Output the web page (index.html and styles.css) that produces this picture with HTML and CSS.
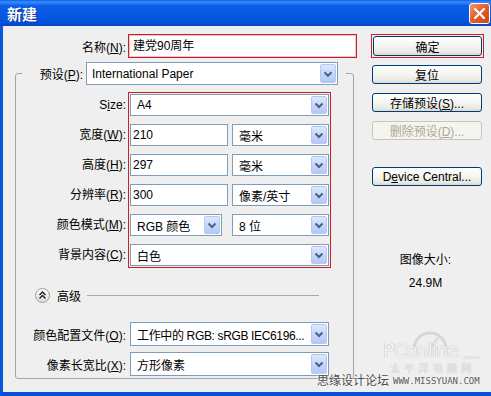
FILE: index.html
```html
<!DOCTYPE html>
<html lang="zh-CN">
<head>
    <meta charset="UTF-8">
    <title>新建</title>
    <link rel="stylesheet" href="styles.css">
</head>
<body>
<div class="window">
    <div class="titlebar">
        <span class="title">新建</span>
        <span class="close">
            <svg width="13" height="13" viewBox="0 0 13 13"><path d="M2 2 L11 11 M11 2 L2 11" stroke="#fff" stroke-width="2.2" stroke-linecap="round"/></svg>
        </span>
    </div>
    <div class="frame">
        <div class="main">
            <div class="name-row">
                <span class="lbl name-lbl">名称(<u>N</u>):</span>
                <div class="name-box">建党90周年</div>
            </div>
            <fieldset class="group">
                <legend>
                    <div class="preset">
                        <span class="lbl">预设(<u>P</u>):</span>
                        <div class="select preset-sel"><span class="val">International Paper</span><span class="arrow"></span></div>
                    </div>
                </legend>
                <div class="params">
                    <div class="labels">
                        <span class="lbl">S<u>i</u>ze:</span>
                        <span class="lbl">宽度(<u>W</u>):</span>
                        <span class="lbl">高度(<u>H</u>):</span>
                        <span class="lbl">分辨率(<u>R</u>):</span>
                        <span class="lbl">颜色模式(<u>M</u>):</span>
                        <span class="lbl">背景内容(<u>C</u>):</span>
                    </div>
                    <div class="mark params-box">
                        <div class="select full"><span class="val">A4</span><span class="arrow"></span></div>
                        <div class="pair">
                            <div class="input">210</div>
                            <div class="select unit"><span class="val">毫米</span><span class="arrow"></span></div>
                        </div>
                        <div class="pair">
                            <div class="input">297</div>
                            <div class="select unit"><span class="val">毫米</span><span class="arrow"></span></div>
                        </div>
                        <div class="pair">
                            <div class="input">300</div>
                            <div class="select unit"><span class="val">像素/英寸</span><span class="arrow"></span></div>
                        </div>
                        <div class="pair">
                            <div class="select mode"><span class="val">RGB 颜色</span><span class="arrow"></span></div>
                            <div class="select unit"><span class="val">8 位</span><span class="arrow"></span></div>
                        </div>
                        <div class="select full"><span class="val">白色</span><span class="arrow"></span></div>
                    </div>
                </div>
                <div class="advanced">
                    <svg class="toggle" width="15" height="15" viewBox="0 0 15 15">
                        <defs><linearGradient id="tg" x1="0" y1="0" x2="0" y2="1"><stop offset="0" stop-color="#ffffff"/><stop offset="1" stop-color="#dcdcdc"/></linearGradient></defs>
                        <circle cx="7.5" cy="7.5" r="7" fill="url(#tg)" stroke="#9c9c9c"/>
                        <path d="M4.5 7 L7.5 4 L10.5 7 M4.5 10.5 L7.5 7.5 L10.5 10.5" fill="none" stroke="#222" stroke-width="1.4"/>
                    </svg>
                    <span class="adv-text">高级</span>
                    <span class="rule"></span>
                </div>
                <div class="row">
                    <span class="lbl">颜色配置文件(<u>O</u>):</span>
                    <div class="select full tall"><span class="val tight">工作中的 RGB: sRGB IEC6196...</span><span class="arrow"></span></div>
                </div>
                <div class="row">
                    <span class="lbl">像素长宽比(<u>X</u>):</span>
                    <div class="select full tall"><span class="val">方形像素</span><span class="arrow"></span></div>
                </div>
            </fieldset>
        </div>
        <div class="side">
            <div class="mark ok-box"><button class="btn ok">确定</button></div>
            <button class="btn reset">复位</button>
            <button class="btn">存储预设(<u>S</u>)...</button>
            <button class="btn disabled">删除预设(<u>D</u>)...</button>
            <button class="btn device">D<u>e</u>vice Central...</button>
            <div class="size-info">
                <p>图像大小:</p>
                <p class="size-val">24.9M</p>
            </div>
        </div>
    </div>
    <div class="watermark">
        <svg class="dial" width="40" height="20" viewBox="0 0 40 20"><path d="M4 19 A16 16 0 0 1 36 19" fill="none" stroke="#d6d6d6" stroke-width="3"/><path d="M20 19 L28 8" stroke="#d6d6d6" stroke-width="2"/></svg>
        <span class="pc">PConline</span>
        <span class="pc-dom">.com.cn</span>
        <span class="pc-cn">太 平 洋 电 脑 网</span>
        <span class="wm-cn">思缘设计论坛</span>
        <span class="wm-url">WWW.MISSYUAN.COM</span>
    </div>
</div>
</body>
</html>
```

FILE: styles.css
```css
*{
    margin: 0;
    padding: 0;
    box-sizing: border-box;
}
body{
    width: 491px;
    height: 396px;
    overflow: hidden;
    background: #efefef;
    font-family: "Liberation Sans", "Noto Sans CJK SC", sans-serif;
    font-size: 12px;
    color: #000;
}
.window{
    position: relative;
    width: 491px;
    height: 396px;
    display: flex;
    flex-direction: column;
}
.titlebar{
    height: 26px;
    flex: none;
    display: flex;
    align-items: center;
    justify-content: space-between;
    padding: 0 1px 0 7px;
    background: linear-gradient(#0a5ff0 0%, #3a8cf8 8%, #0c5de9 22%, #0558e2 60%, #0452da 88%, #0244c4 100%);
}
.title{
    color: #fff;
    font-family: "Noto Sans CJK SC", sans-serif;
    font-weight: bold;
    font-size: 15px;
    text-shadow: 1px 1px 0 #0a2f95;
}
.close{
    width: 21px;
    height: 21px;
    border: 1px solid #fff;
    border-radius: 3px;
    background: linear-gradient(135deg, #f29a6c 0%, #e2612f 45%, #cf4316 100%);
    display: flex;
    align-items: center;
    justify-content: center;
}
.frame{
    flex: 1;
    display: flex;
    border-left: 3px solid #0858dc;
    border-bottom: 4px solid #0650d6;
    background: #efefef;
}
.main{
    width: 357px;
    padding-top: 8px;
}
.lbl{
    text-align: right;
    white-space: nowrap;
}
.name-row{
    display: flex;
    align-items: center;
}
.name-lbl{
    width: 123px;
    margin-right: 2px;
}
.name-box{
    width: 229px;
    height: 24px;
    line-height: 22px;
    padding-left: 4px;
    background: #fff;
    border: 1px solid #c8202a;
    box-shadow: inset 0 0 0 1px #eec4c4;
}
.group{
    margin: 4px 0 0 12px;
    width: 339px;
    border: 1px solid #a6a6a6;
    border-radius: 3px;
    padding: 7px 0 2px 0;
}
.group legend{
    margin-left: 6px;
    padding: 0 8px 0 14px;
}
.preset{
    display: flex;
    align-items: center;
    height: 23px;
}
.preset .lbl{
    width: 47px;
    margin-right: 3px;
}
.select{
    display: flex;
    align-items: center;
    height: 22px;
    background: #fff;
    border: 1px solid #7f9db9;
}
.select .val{
    flex: 1;
    padding-left: 6px;
    white-space: nowrap;
}
.select .val.tight{
    letter-spacing: -0.35px;
}
.select .arrow{
    width: 16px;
    align-self: stretch;
    margin: 1px;
    border: 1px solid #b4c8f4;
    border-radius: 2px;
    background-image: url("data:image/svg+xml,%3Csvg xmlns='http://www.w3.org/2000/svg' width='14' height='18'%3E%3Cpath d='M3.5 7.5 L7 11 L10.5 7.5' fill='none' stroke='%234d6185' stroke-width='2'/%3E%3C/svg%3E"), linear-gradient(#dde8fd, #c4d5f9 55%, #b4c8f4);
    background-position: center;
    background-repeat: no-repeat;
}
.preset-sel{
    width: 252px;
    height: 23px;
}
.preset-sel .val{
    padding-left: 5px;
}
.params{
    display: flex;
}
.labels{
    width: 110px;
    margin-right: 2px;
    padding-top: 2px;
    display: flex;
    flex-direction: column;
    gap: 8px;
}
.labels .lbl{
    height: 22px;
    line-height: 22px;
}
.mark{
    border: 1px solid #cc1f27;
    padding: 1px;
}
.params-box{
    width: 203px;
    display: flex;
    flex-direction: column;
    gap: 8px;
}
.full{
    width: 199px;
}
.pair{
    display: flex;
    justify-content: space-between;
}
.input{
    width: 98px;
    height: 22px;
    line-height: 20px;
    padding-left: 2px;
    background: #fff;
    border: 1px solid #7f9db9;
}
.unit{
    width: 97px;
}
.mode{
    width: 92px;
}
.advanced{
    display: flex;
    align-items: center;
    height: 15px;
    margin-top: 20px;
    padding-left: 19px;
}
.adv-text{
    margin-left: 7px;
    margin-right: 6px;
}
.rule{
    flex: 1;
    height: 1px;
    margin-right: 34px;
    background: #a9a9a9;
}
.row{
    display: flex;
    align-items: center;
    margin-top: 19px;
}
.row + .row{
    margin-top: 6px;
}
.row .lbl{
    width: 110px;
    margin-right: 4px;
}
.tall{
    height: 24px;
}
.side{
    flex: 1;
    padding: 8px 0 0 11px;
    display: flex;
    flex-direction: column;
    align-items: flex-start;
}
.btn{
    width: 110px;
    height: 19px;
    margin-left: 1px;
    margin-top: 9px;
    font: inherit;
    color: #000;
    border: 1px solid #003c74;
    border-radius: 3px;
    background: linear-gradient(#ffffff 0%, #f6f6f3 45%, #e9e8e2 85%, #d9d7cf 100%);
}
.ok-box{
    margin-top: 0;
}
.btn.ok{
    width: 109px;
    height: 20px;
    margin: 0;
}
.btn.reset{
    margin-top: 7px;
}
.btn.disabled{
    color: #aca899;
    border-color: #c9c7ba;
    background: #f5f4ee;
}
.btn.device{
    margin-top: 27px;
}
.size-info{
    align-self: stretch;
    margin: 66px 11px 0 0;
    text-align: center;
    line-height: 16px;
}
.size-val{
    margin-top: 7px;
}
.watermark{
    position: absolute;
    left: 0;
    top: 0;
    width: 491px;
    height: 396px;
    pointer-events: none;
}
.watermark span{
    position: absolute;
    line-height: 1;
    white-space: nowrap;
}
.dial{
    position: absolute;
    left: 410px;
    top: 330px;
}
.pc{
    left: 383px;
    top: 341px;
    font-family: "DejaVu Sans", sans-serif;
    font-size: 19px;
    letter-spacing: -1px;
    color: #f3f3f3;
    text-shadow: 0 0 1px #bdbdbd, 0 0 1px #bdbdbd;
}
.pc-dom{
    left: 462px;
    top: 355px;
    font-size: 5px;
    color: #cfcfcf;
}
.pc-cn{
    left: 390px;
    top: 363px;
    font-family: "Noto Sans CJK SC", sans-serif;
    font-size: 10px;
    letter-spacing: 1px;
    color: #e6e6e6;
    text-shadow: 0 0 1px #b8b8b8;
}
.wm-cn{
    left: 317px;
    top: 374px;
    font-family: "Noto Sans CJK SC", sans-serif;
    font-size: 12px;
    color: #4a4a4a;
    text-shadow: 0 0 2px #fff, 0 0 2px #fff;
}
.wm-url{
    left: 393px;
    top: 377px;
    font-family: "DejaVu Sans Mono", monospace;
    font-size: 9px;
    color: #5a5a5a;
    text-shadow: 0 0 2px #fff;
}
```
